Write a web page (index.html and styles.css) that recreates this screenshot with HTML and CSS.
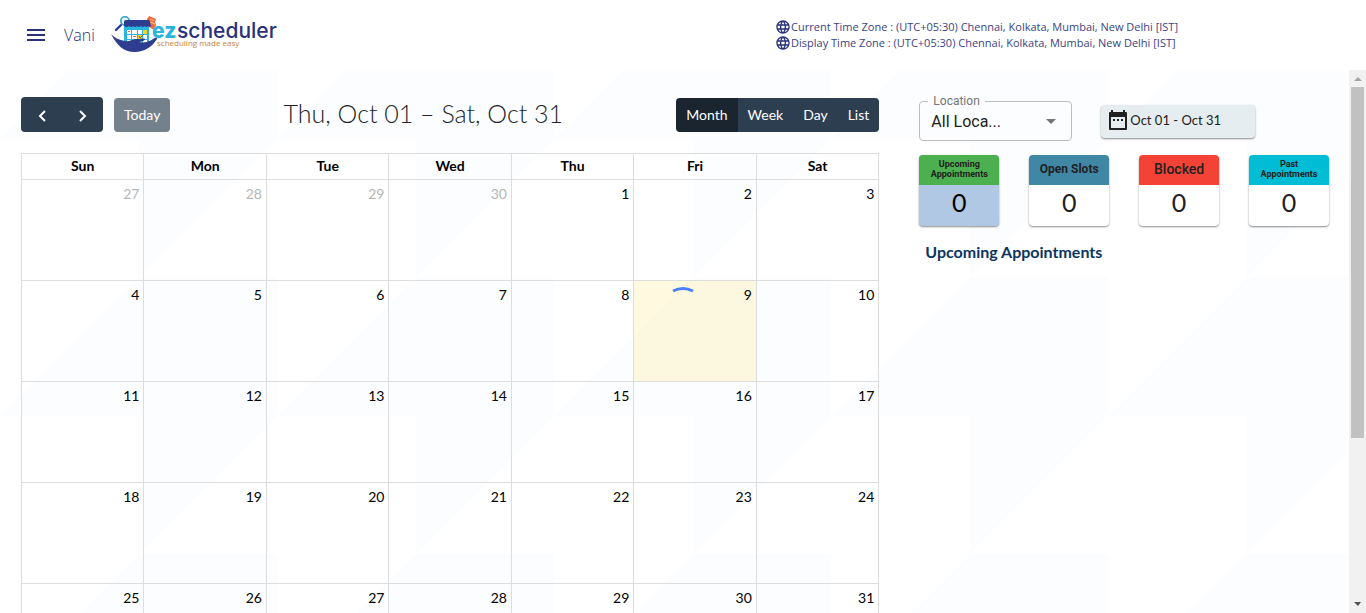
FILE: index.html
```html
<!DOCTYPE html>
<html lang="en">
<head>
<meta charset="utf-8">
<meta name="viewport" content="width=device-width, initial-scale=1">
<title>ezscheduler</title>
<link rel="stylesheet" href="styles.css">
</head>
<body>
<header class="topbar">
  <button class="menu-btn" type="button" aria-label="Menu">
    <svg width="24" height="24" viewBox="0 0 24 24"><path fill="#293179" d="M3 18h18v-2H3v2zm0-5h18v-2H3v2zm0-7v2h18V6H3z"/></svg>
  </button>
  <span class="user">Vani</span>
  <a class="logo" href="#" aria-label="ezscheduler, scheduling made easy">
    <svg width="170" height="38" viewBox="0 0 170 38">
      <path d="M36 3l2-3 7 3-1 3 1 3-2 5-5-3z" fill="#f26a36"/>
      <path d="M39 3l4 2M39 6l5 2" stroke="#ffc2a0" stroke-width="1"/>
      <path d="M10 9l-5 5" stroke="#2e3d8f" stroke-width="2.4" stroke-linecap="round"/>
      <circle cx="14" cy="5" r="4.2" fill="#e4f6fb" stroke="#2a9fcb" stroke-width="1.6"/>
      <path d="M13 9h25v19H13z" fill="#29b5e0"/>
      <path d="M13 6q0-2 2-2h22q2 0 2 2l1 4q-1 2-3 0-2 2-3 0-2 2-4 0-2 2-4 0-2 2-4 0-2 2-4 0-2 2-5 0z" fill="#2e3d8f"/>
      <path d="M16 14h4v4h-4zM21 14h5v4h-5zM27 14h4v4h-4zM16 19h4v4h-4zM21 19h5v4h-5zM32 19h4v4h-4zM16 24h4v4h-4zM21 24h5v4h-5zM27 24h4v3h-4zM32 24h4v3h-4z" fill="#fff"/>
      <path d="M32 14h4v4h-4zM27 19h4v4h-4z" fill="#f8d327"/>
      <path d="M17 15h2v1h-2zM22 20h3v1h-3z" fill="#f26a36"/>
      <path d="M28 20l1 2 4-4" stroke="#8a5a1a" fill="none"/>
      <path d="M0 18c4 4 8 6 14 7 5 1 7-2 13-2 3 0 6-1 7 0 0 2-4 3-6 3 5 1 10 0 14-3 2-1 5-2 4 0-5 8-13 13-22 13C12 36 6 29 0 18z" fill="#2e3d8f"/>
      <text class="logo-ez" x="41" y="22">ez</text>
      <text class="logo-name" x="66" y="22">scheduler</text>
      <text class="logo-tag" x="46" y="30">scheduling made easy</text>
    </svg>
  </a>
  <div class="zones">
    <div class="zone"><svg class="globe" viewBox="0 0 24 24"><use href="#globe"/></svg><span>Current Time Zone : (UTC+05:30) Chennai, Kolkata, Mumbai, New Delhi [IST]</span></div>
    <div class="zone"><svg class="globe" viewBox="0 0 24 24"><use href="#globe"/></svg><span>Display Time Zone : (UTC+05:30) Chennai, Kolkata, Mumbai, New Delhi [IST]</span></div>
  </div>
</header>
<svg class="symbols" aria-hidden="true">
  <symbol id="globe" viewBox="0 0 24 24"><path fill="#293179" d="M11.99 2C6.47 2 2 6.48 2 12s4.47 10 9.99 10C17.52 22 22 17.52 22 12S17.52 2 11.99 2zm6.93 6h-2.95c-.32-1.25-.78-2.45-1.38-3.56 1.84.63 3.37 1.91 4.33 3.56zM12 4.04c.83 1.2 1.48 2.53 1.91 3.96h-3.82c.43-1.43 1.08-2.76 1.91-3.96zM4.26 14C4.1 13.36 4 12.69 4 12s.1-1.36.26-2h3.38c-.08.66-.14 1.32-.14 2s.06 1.34.14 2H4.26zm.82 2h2.95c.32 1.25.78 2.45 1.38 3.56-1.84-.63-3.37-1.9-4.33-3.56zm2.95-8H5.08c.96-1.66 2.49-2.93 4.33-3.56C8.81 5.55 8.35 6.75 8.03 8zM12 19.96c-.83-1.2-1.48-2.53-1.91-3.96h3.82c-.43 1.43-1.08 2.76-1.91 3.96zM14.34 14H9.66c-.09-.66-.16-1.32-.16-2s.07-1.35.16-2h4.68c.09.65.16 1.32.16 2s-.07 1.34-.16 2zm.25 5.56c.6-1.11 1.06-2.31 1.38-3.56h2.95c-.96 1.65-2.49 2.93-4.33 3.56zM16.36 14c.08-.66.14-1.32.14-2s-.06-1.34-.14-2h3.38c.16.64.26 1.31.26 2s-.1 1.36-.26 2h-3.38z"/></symbol>
</svg>
<div class="body">
  <main class="content">
    <section class="calendar">
      <div class="toolbar">
        <div class="tool-left">
          <div class="btn-group">
            <button class="btn btn-nav" type="button" aria-label="Previous"><svg width="12" height="16" viewBox="0 0 12 16"><path d="M9 4L4 9l5 5" fill="none" stroke="#fff" stroke-width="2"/></svg></button>
            <button class="btn btn-nav" type="button" aria-label="Next"><svg width="12" height="16" viewBox="0 0 12 16"><path d="M3 4l5 5-5 5" fill="none" stroke="#fff" stroke-width="2"/></svg></button>
          </div>
          <button class="btn btn-today" type="button" disabled>Today</button>
        </div>
        <h2 class="title">Thu, Oct 01 – Sat, Oct 31</h2>
        <div class="btn-group">
          <button class="btn btn-active" type="button">Month</button>
          <button class="btn" type="button">Week</button>
          <button class="btn" type="button">Day</button>
          <button class="btn" type="button">List</button>
        </div>
      </div>
      <table class="month">
        <thead><tr><th>Sun</th><th>Mon</th><th>Tue</th><th>Wed</th><th>Thu</th><th>Fri</th><th>Sat</th></tr></thead>
        <tbody>
          <tr><td class="other">27</td><td class="other">28</td><td class="other">29</td><td class="other">30</td><td>1</td><td>2</td><td>3</td></tr>
          <tr><td>4</td><td>5</td><td>6</td><td>7</td><td>8</td><td class="today">9</td><td>10</td></tr>
          <tr><td>11</td><td>12</td><td>13</td><td>14</td><td>15</td><td>16</td><td>17</td></tr>
          <tr><td>18</td><td>19</td><td>20</td><td>21</td><td>22</td><td>23</td><td>24</td></tr>
          <tr><td>25</td><td>26</td><td>27</td><td>28</td><td>29</td><td>30</td><td>31</td></tr>
        </tbody>
      </table>
    </section>
    <aside class="side">
      <div class="filters">
        <div class="field">
          <label for="location">Location</label>
          <select id="location"><option>All Loca...</option></select>
          <svg class="caret" width="24" height="24" viewBox="0 0 24 24"><path fill="#757575" d="M7 10l5 5 5-5z"/></svg>
        </div>
        <button class="date-btn" type="button">
          <svg width="24" height="24" viewBox="0 0 24 24"><path fill="#212121" d="M5 3V1h2v2h10V1h2v2h1q1 0 1 1v16q0 1-1 1H4q-1 0-1-1V4q0-1 1-1zM5 8v11h14V8zM7 10h2v2H7zM11 10h2v2h-2zM15 10h2v2h-2z" fill-rule="evenodd"/></svg>
          <span>Oct 01 - Oct 31</span>
        </button>
      </div>
      <div class="cards">
        <button class="card selected" type="button"><span class="card-head green">Upcoming Appointments</span><span class="count">0</span></button>
        <button class="card" type="button"><span class="card-head blue">Open Slots</span><span class="count">0</span></button>
        <button class="card" type="button"><span class="card-head red">Blocked</span><span class="count">0</span></button>
        <button class="card" type="button"><span class="card-head cyan">Past Appointments</span><span class="count">0</span></button>
      </div>
      <h3 class="list-title">Upcoming Appointments</h3>
    </aside>
  </main>
  <div class="scrollbar" aria-hidden="true">
    <svg width="17" height="17" viewBox="0 0 17 17"><path fill="#a3a3a3" d="M5 11l4-4 4 4z"/></svg>
    <div class="track"><div class="thumb"></div></div>
    <svg width="17" height="17" viewBox="0 0 17 17"><path fill="#505050" d="M5 6h7l-3 4z"/></svg>
  </div>
</div>
<svg class="spinner" width="40" height="40" viewBox="0 0 40 40" role="img" aria-label="Loading"><path d="M10 5q10-5 20 0" fill="none" stroke="#4a80ff" stroke-width="3"/></svg>
</body>
</html>
```
FILE: styles.css
```css
* { box-sizing: border-box; }

body {
  margin: 0;
  height: 100vh;
  display: flex;
  flex-direction: column;
  overflow: hidden;
  font-family: Lato, "Open Sans", sans-serif;
  color: #212529;
  background: #fff url("data:image/svg+xml,%3Csvg xmlns='http://www.w3.org/2000/svg' width='277' height='277'%3E%3Cpath fill='%23fcfdff' d='M0 139L139 0h138v139L139 277V139z'/%3E%3C/svg%3E");
}

button { font: inherit; border: 0; padding: 0; cursor: pointer; }

.topbar {
  flex: none;
  display: flex;
  align-items: center;
  height: 70px;
  padding: 0 188px 0 24px;
  background: #fff;
}
.menu-btn { display: flex; background: none; }
.user { margin-left: 16px; font: 300 16px/20px "Open Sans", sans-serif; color: #293179; }
.logo { display: flex; margin-left: 16px; }
.logo-ez { font: 800 21px Inter, sans-serif; fill: #29b5e0; }
.logo-name { font: 500 21px Inter, sans-serif; fill: #293179; }
.logo-tag { font: 500 8px "Open Sans", sans-serif; fill: #c8813c; }
.zones { margin-left: auto; color: #3c4383; font: 400 11px/16px "Open Sans", sans-serif; }
.zone { display: flex; align-items: center; }
.globe { width: 16px; height: 16px; flex: none; }
.symbols { display: none; }

.body { flex: 1; display: flex; min-height: 0; }
.content { flex: 1; display: flex; min-width: 0; overflow: hidden; }
.calendar { flex: none; width: 66.667%; padding: 27px 20px 0 21px; }
.side { flex: 1; padding: 31px 20px 0; }

.toolbar { display: flex; align-items: flex-end; justify-content: space-between; height: 35px; margin-bottom: 21px; }
.tool-left { display: flex; align-items: flex-end; gap: 11px; }
.btn-group { display: flex; border-radius: 4px; overflow: hidden; }
.btn {
  height: 34px;
  padding: 0 10px;
  background: #2c3e50;
  color: #fff;
  font-size: 14px;
  line-height: 32px;
}
.btn-nav { display: flex; align-items: center; justify-content: center; width: 41px; height: 35px; }
.btn-today { border-radius: 4px; opacity: .65; cursor: default; }
.btn-active { background: #1a252f; }
.title { margin: 0; font-size: 25px; line-height: 32px; font-weight: 300; align-self: flex-start; }

.month { width: 100%; border-collapse: collapse; table-layout: fixed; color: #000; font-size: 14px; }
.month th, .month td { border: 1px solid #ddd; }
.month th { height: 26px; padding: 0 0 2px; line-height: 22px; font-weight: 700; }
.month td { height: 101px; padding: 5px 4px; text-align: right; vertical-align: top; line-height: 18px; }
.month .other { color: #b5b5b5; }
.month .today { background: rgba(255, 220, 40, .15); }

.filters { display: flex; align-items: center; gap: 29px; }
.field { position: relative; width: 153px; }
.field label {
  position: absolute;
  top: -8px;
  left: 9px;
  padding: 0 5px;
  background: #fcfdff;
  color: #757575;
  font: 12px/16px Roboto, sans-serif;
}
.field select {
  width: 100%;
  height: 40px;
  padding: 0 32px 0 11px;
  appearance: none;
  border: 1px solid #bdbdbd;
  border-radius: 4px;
  background: transparent;
  color: #212121;
  font: 16px Roboto, sans-serif;
}
.caret { position: absolute; right: 9px; top: 8px; pointer-events: none; }
.date-btn {
  display: flex;
  align-items: center;
  width: 154px;
  height: 33px;
  padding: 0 5px;
  border-radius: 4px;
  background: #e6edf0;
  box-shadow: 0 1px 2px rgba(0, 0, 0, .45);
  color: #212121;
  font-size: 13px;
  line-height: 16px;
}
.date-btn span { padding-bottom: 3px; }

.cards { display: flex; justify-content: space-between; margin-top: 14px; }
.card {
  display: flex;
  flex-direction: column;
  width: 80px;
  border-radius: 4px;
  overflow: hidden;
  background: #fff;
  box-shadow: 0 1px 2px rgba(0, 0, 0, .45);
  color: #212121;
}
.card-head {
  display: flex;
  align-items: center;
  justify-content: center;
  align-self: stretch;
  height: 30px;
  padding: 0 8px 2px;
  font-family: Roboto, sans-serif;
  font-weight: 700;
  font-size: 9px;
  line-height: 10px;
  color: #212121;
}
.green { background: #4caf50; }
.blue { background: #4086a5; font-size: 12px; }
.red { background: #f44336; font-size: 14px; font-weight: 500; }
.cyan { background: #00bcd4; }
.count { align-self: stretch; height: 41px; font-size: 25px; line-height: 35px; }
.selected { background: #b0c8e4; color: #000; }
.list-title { margin: 15px 0 0 6px; font-size: 16px; line-height: 22px; font-weight: 700; color: #0b3561; }

.scrollbar { flex: none; display: flex; flex-direction: column; width: 17px; background: #f1f1f1; }
.track { flex: 1; padding: 0 2px; }
.thumb { height: 69%; background: #c1c1c1; }

.spinner { position: fixed; top: 286px; left: 50%; margin-left: -20px; }
```
